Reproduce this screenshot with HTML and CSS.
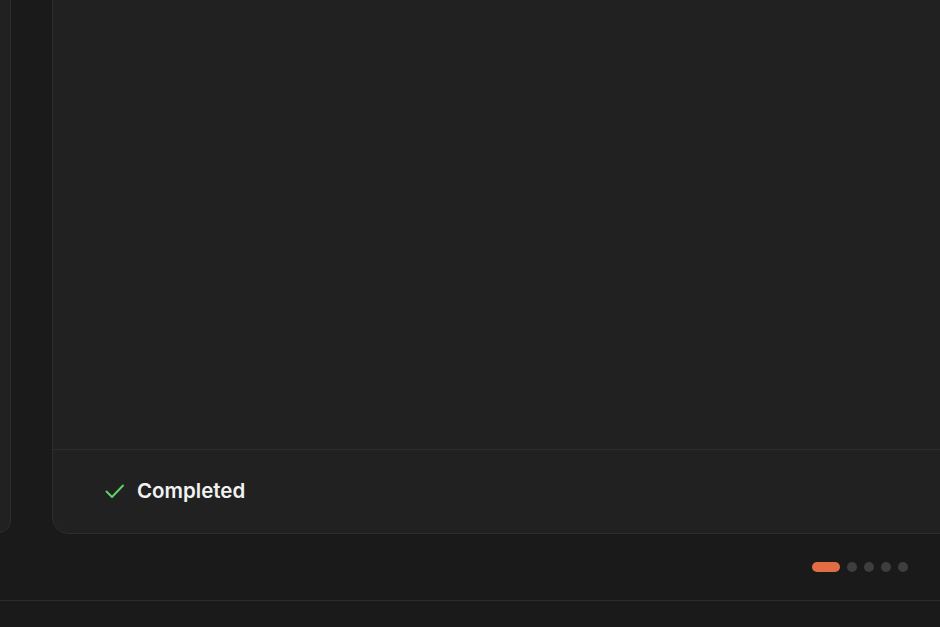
FILE: index.html
```html
<!DOCTYPE html>
<html lang="en">
<head>
    <meta charset="UTF-8">
    <meta name="viewport" content="width=device-width, initial-scale=1.0">
    <title>Task Status</title>
    <link rel="stylesheet" href="styles.css">
</head>
<body>
    <div class="page">
        <div class="workspace">
            <aside class="side-panel"></aside>
            <main class="card">
                <div class="card-body"></div>
                <div class="card-footer">
                    <svg class="check" width="20" height="20" viewBox="0 0 20 20" fill="none">
                        <polyline points="1.5,10.5 7,16 18,4.5" stroke="#5fcf68" stroke-width="2" stroke-linecap="round" stroke-linejoin="round"/>
                    </svg>
                    <span class="status">Completed</span>
                </div>
            </main>
        </div>

        <div class="pager">
            <span class="dot active"></span>
            <span class="dot"></span>
            <span class="dot"></span>
            <span class="dot"></span>
            <span class="dot"></span>
        </div>

        <footer class="bottom-bar"></footer>
    </div>
</body>
</html>
```

FILE: styles.css
```css
:root {
    --bg: #1a1a1a;
    --card: #212121;
    --line: #2c2c2c;
    --accent: #e26d45;
    --dot: #3e3e3e;
    --text: #f2f2f2;
}

html, body {
    margin: 0;
    padding: 0;
    background-color: var(--bg);
    font-family: Inter, 'Liberation Sans', sans-serif;
    color: var(--text);
    overflow: hidden;
}

.page {
    width: 940px;
    height: 627px;
    display: flex;
    flex-direction: column;
}

.workspace {
    display: flex;
    gap: 41px;
    height: 534px;
}

.side-panel {
    flex-shrink: 0;
    width: 300px;
    margin-left: -289px;
    margin-top: -40px;
    margin-bottom: 1px;
    box-sizing: border-box;
    background-color: var(--card);
    border: 1px solid var(--line);
    border-radius: 12px;
}

.card {
    flex: 1;
    margin-top: -40px;
    margin-right: -40px;
    background-color: var(--card);
    border: 1px solid var(--line);
    border-radius: 16px;
    display: flex;
    flex-direction: column;
}

.card-body {
    flex: 1;
}

.card-footer {
    height: 84px;
    border-top: 1px solid var(--line);
    display: flex;
    align-items: center;
    gap: 12px;
    padding-left: 52px;
    padding-bottom: 2px;
    box-sizing: border-box;
}

.check {
    display: block;
}

.status {
    font-size: 20.5px;
    font-weight: 600;
    letter-spacing: 0;
}

.pager {
    height: 66px;
    display: flex;
    align-items: center;
    justify-content: flex-end;
    gap: 7px;
    padding-right: 32px;
}

.dot {
    width: 10px;
    height: 10px;
    border-radius: 5px;
    background-color: var(--dot);
}

.dot.active {
    width: 28px;
    background-color: var(--accent);
}

.bottom-bar {
    flex: 1;
    border-top: 1px solid var(--line);
}
```
